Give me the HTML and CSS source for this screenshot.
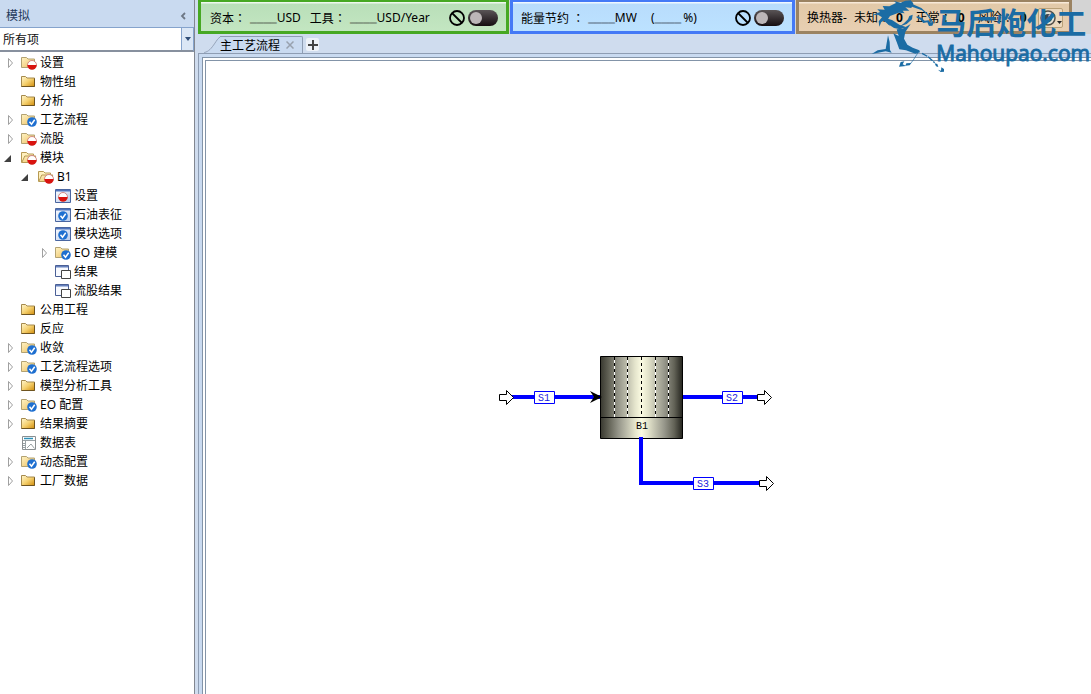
FILE: index.html
```
<!DOCTYPE html>
<html lang="zh-CN">
<head>
  <meta charset="UTF-8">
  <meta name="viewport" content="width=device-width, initial-scale=1.0">
  <title>主工艺流程</title>
  <link rel="stylesheet" href="styles.css">
</head>
<body>
<svg class="defs" width="0" height="0" aria-hidden="true">
  <defs>
    <linearGradient id="gold" x1="0" y1="0" x2="1" y2="1">
      <stop offset="0" stop-color="#fff6cf"/>
      <stop offset=".5" stop-color="#f5d170"/>
      <stop offset="1" stop-color="#d08c0c"/>
    </linearGradient>
    <linearGradient id="pale" x1="0" y1="0" x2="1" y2="1">
      <stop offset="0" stop-color="#fff3c4"/>
      <stop offset="1" stop-color="#ecbf60"/>
    </linearGradient>
    <linearGradient id="sheet" x1="0" y1="0" x2="1" y2="1">
      <stop offset="0" stop-color="#fff"/>
      <stop offset="1" stop-color="#b4c8ea"/>
    </linearGradient>
  </defs>
  <symbol id="i-red" viewBox="0 0 10 10">
    <circle cx="5" cy="5" r="4.5" fill="#fff" stroke="#c9706c" stroke-width=".8"/>
    <path d="M.4 5h9.200a4.600 4.600 0 0 1-9.200 0z" fill="#d9130f"/>
  </symbol>
  <symbol id="i-ok" viewBox="0 0 10 10">
    <circle cx="5" cy="5" r="4.800" fill="#1e6fd0"/>
    <path d="M2.500 4.800l2 2.400L7.700 2.800" fill="none" stroke="#fff" stroke-width="1.500"/>
  </symbol>
  <symbol id="i-folder" viewBox="0 0 16 16">
    <path d="M.5 12.500v-10h4l1.500 1.500h7.500v8.500z" fill="url(#gold)" stroke="#a58a4e"/>
    <path d="M.5 12.500h13V4.500" fill="none" stroke="#6e5420"/>
  </symbol>
  <symbol id="i-pale" viewBox="0 0 16 16">
    <path d="M.5 12.500v-10h5l1.500 1.500h6.500v8.500z" fill="url(#pale)" stroke="#b3a272"/>
  </symbol>
  <symbol id="i-open" viewBox="0 0 16 16">
    <path d="M.5 12.500v-10h5l1.500 1.500h5.500v2" fill="#fff0bd" stroke="#b79a53"/>
    <path d="M.8 12.500l3-6.500h11l-3 6.500z" fill="url(#pale)" stroke="#b79a53"/>
  </symbol>
  <symbol id="i-form" viewBox="0 0 16 16">
    <path d="M.5 1.500h15v13H.5z" fill="url(#sheet)" stroke="#4a66a0"/>
    <path d="M1 2h14v1.500H1z" fill="#4f74bd"/>
  </symbol>
  <symbol id="i-result" viewBox="0 0 16 16">
    <path d="M.5 1.500h13v11H.5z" fill="#f8faff" stroke="#4a5f96"/>
    <path d="M1 2h12v1.500H1z" fill="#6581bd"/>
    <path d="M6.500 6.500h9v8h-9z" fill="#fff" stroke="#444"/>
  </symbol>
  <symbol id="i-data" viewBox="0 0 16 16">
    <path d="M1.500 1.500h13v13h-13z" fill="#fff" stroke="#8a8f91"/>
    <path d="M3 3.500h9" stroke="#2b90b8" stroke-width="1.500"/>
    <path d="M2 5.500h12M2 8.500h2M2 10.500h2M2 12.500h2M4.500 6v8M6 13l4-4 3.500 4.500" fill="none" stroke="#9aa2a5"/>
  </symbol>
  <symbol id="i-closed" viewBox="0 0 8 12">
    <path d="M1.500 1.500v9L5.500 6z" fill="#fff" stroke="#a0a0a0"/>
  </symbol>
  <symbol id="i-opened" viewBox="0 0 8 12">
    <path d="M7 3v7H0z" fill="#404040"/>
  </symbol>
  <symbol id="i-no" viewBox="0 0 16 16">
    <circle cx="8" cy="8" r="7" fill="none" stroke="#000" stroke-width="1.800"/>
    <path d="M3 3l10 10" stroke="#000" stroke-width="1.800"/>
  </symbol>
</svg>

<div class="app">
  <aside class="sidebar">
    <header class="side-head">
      <span>模拟</span>
      <button class="collapse" aria-label="折叠">
        <svg width="6" height="8" viewBox="0 0 6 8"><path d="M5 1L2 4 5 7" fill="none" stroke="#6d7785" stroke-width="1.800"/></svg>
      </button>
    </header>
    <div class="filter">
      <select aria-label="筛选"><option>所有项</option></select>
      <span class="filter-arrow"><svg width="6" height="4" viewBox="0 0 6 4"><path d="M0 0h6L3 4z" fill="#2f4d77"/></svg></span>
    </div>
    <nav class="tree"><ul id="tree"></ul></nav>
  </aside>

  <main class="main">
    <div class="panels">
      <section class="panel capital">
        <span>资本<i lang="zh-TW">：</i></span><span class="blank">____</span><span>USD</span>
        <span class="next">工具<i lang="zh-TW">：</i></span><span class="blank">____</span><span>USD/Year</span>
        <div class="switch">
          <svg width="16" height="16"><use href="#i-no"/></svg>
          <input type="checkbox" aria-label="资本分析">
        </div>
      </section>
      <section class="panel energy">
        <span>能量节约 <i lang="zh-TW">：</i></span><span class="blank">____</span><span>MW</span>
        <span class="paren">(</span><span class="blank tight">____</span><span class="percent">%)</span>
        <div class="switch">
          <svg width="16" height="16"><use href="#i-no"/></svg>
          <input type="checkbox" aria-label="能量分析">
        </div>
      </section>
      <section class="panel exchanger">
        <span>换热器-</span>
        <span class="stat">未知<i lang="zh-TW">：</i><b>0</b></span>
        <span class="stat">正常<i lang="zh-TW">：</i><b>0</b></span>
        <span class="stat">风险<i lang="zh-TW">：</i><b>0</b></span>
        <button class="eye" aria-label="显示">
          <svg width="22" height="18" viewBox="0 0 22 18">
            <circle cx="8" cy="8" r="7" fill="#e8e0d4" stroke="#55504a" stroke-width="1.500"/>
            <circle cx="8" cy="8" r="4" fill="#3d4650"/>
            <circle cx="10" cy="6" r="1.500" fill="#fff"/>
            <path d="M17 11h5l-2.500 3z" fill="#222"/>
          </svg>
        </button>
      </section>
    </div>

    <div class="tabs">
      <div class="tab">
        <svg class="tab-edge" width="22" height="19" viewBox="0 0 22 19">
          <path d="M0 19C5 18 8 14 12 8S17 .5 22 .5V19z" fill="#c9daf0"/>
          <path d="M0 18.500C5 17.500 8 14 12 8S17 .5 22 .5" fill="none" stroke="#8e9db3"/>
        </svg>
        <div class="tab-body">
          <span>主工艺流程</span>
          <button class="tab-close" aria-label="关闭">
            <svg width="8" height="8" viewBox="0 0 8 8"><path d="M.5.5l7 7M7.500.5l-7 7" stroke="#98a1ae" stroke-width="1.500"/></svg>
          </button>
        </div>
      </div>
      <button class="tab-add" aria-label="新建">
        <svg width="10" height="10" viewBox="0 0 10 10"><path d="M0 5h10M5 0v10" stroke="#444" stroke-width="2"/></svg>
      </button>
    </div>

    <div class="frame">
      <div class="canvas">
        <svg class="flowsheet" width="290" height="155" viewBox="490 345 290 155">
          <defs>
            <linearGradient id="steel">
              <stop offset="0" stop-color="#38382f"/>
              <stop offset=".1" stop-color="#626256"/>
              <stop offset=".22" stop-color="#96968a"/>
              <stop offset=".33" stop-color="#c0c0ae"/>
              <stop offset=".42" stop-color="#e4e4cc"/>
              <stop offset=".5" stop-color="#fbfbe2"/>
              <stop offset=".58" stop-color="#e4e4cc"/>
              <stop offset=".67" stop-color="#c0c0ae"/>
              <stop offset=".78" stop-color="#96968a"/>
              <stop offset=".9" stop-color="#626256"/>
              <stop offset="1" stop-color="#24241e"/>
            </linearGradient>
          </defs>
          <path d="M512 397h89M683 397h75" stroke="#00f" stroke-width="4"/>
          <path d="M600.500 356.500h82v82h-82z" fill="url(#steel)" stroke="#000"/>
          <path d="M600 417.500h83" stroke="#000"/>
          <path d="M614.500 357v60M627.500 357v60M655.500 357v60M668.500 357v60" stroke="#fff"/>
          <path d="M614.500 357v60M627.500 357v60M641.500 357v60M655.500 357v60M668.500 357v60" stroke="#000" stroke-dasharray="3 3"/>
          <path d="M641 437v46h119" fill="none" stroke="#00f" stroke-width="4"/>
          <path d="M590 391l12 6-12 6 4-6z" fill="#000"/>
          <g fill="#fff" stroke="#000">
            <path d="M499.500 394.500h7v-4l7 7-7 7v-4h-7z"/>
            <path d="M757.500 394.500h7v-4l7 7-7 7v-4h-7z"/>
            <path d="M759.500 480.500h7v-4l7 7-7 7v-4h-7z"/>
          </g>
          <path d="M534.500 391.500h20v12h-20zM722.500 391.500h20v12h-20zM693.500 477.500h20v12h-20z" fill="#fff" stroke="#00f"/>
          <g class="stream">
            <text x="544" y="401">S1</text>
            <text x="732" y="401">S2</text>
            <text x="703" y="487">S3</text>
          </g>
          <text class="block" x="642" y="429">B1</text>
        </svg>
      </div>
    </div>
  </main>

  <div class="brand">
    <svg class="horse" width="76" height="76" viewBox="0 0 228 228" fill="#1b6ca4">
      <!-- mane and back -->
      <path d="M12 46L36 36 28 28 50 29 44 18 64 19 84 9 78 3 98 8 112 2 128 1 136 10 130 24 112 22 124 32 104 32 110 40 92 38 66 48 58 60 66 78 48 62 40 66 34 80 32 64 42 52 30 44z"/>
      <!-- head -->
      <path d="M122 3l16 11 22 10 20 18 17 26-4 9-10 1-5-11-12 2-11-12-9-4 0-5 14 5 10 9 12-1 6 8 3-3-14-22-15-13-26-9-16-6z"/>
      <path d="M134 44l-2 14-16 14-22 8 14-10 12-12 4-10z"/>
      <!-- body and front legs -->
      <path d="M52 54l20 6 22 14 22 8-20 6-18-4-18-12z"/>
      <path d="M86 88l18-2 24-14-16 24-4 20 10 18 16 9 20 8 2 6-14 4-28-10-20-3-8-22-10-26 16 8z"/>
      <path d="M60 106l5 20 1 24 5 8-18-4-42 8 18-11 24-4z"/>
      <!-- hind legs and hooves -->
      <path d="M150 158l-14 22-8 10" fill="none" stroke="#1b6ca4" stroke-width="2"/>
      <path d="M93 200l5-14 11-2-5 9 10 5zM112 197l3-7 15-1-5 7z"/>
      <path d="M162 160l18 10 20 18" fill="none" stroke="#1b6ca4" stroke-width="4" stroke-dasharray="18 3"/>
      <path d="M200 190l8 2 3 9-7-2zM210 209l9 3 1-10 8 5v8l-10 1z"/>
    </svg>
    <div class="brand-text">
      <strong>马后炮化工</strong>
      <span>Mahoupao.com</span>
    </div>
  </div>
</div>

<script>
  // [label, icon, badge, state, children]
  const items = [
    ['设置', 'pale', 'red', 'closed'],
    ['物性组', 'folder'],
    ['分析', 'folder'],
    ['工艺流程', 'pale', 'ok', 'closed'],
    ['流股', 'pale', 'red', 'closed'],
    ['模块', 'open', 'red', 'opened', [
      ['B1', 'open', 'red', 'opened', [
        ['设置', 'form', 'red'],
        ['石油表征', 'form', 'ok'],
        ['模块选项', 'form', 'ok'],
        ['EO 建模', 'pale', 'ok', 'closed'],
        ['结果', 'result'],
        ['流股结果', 'result']
      ]]
    ]],
    ['公用工程', 'folder'],
    ['反应', 'folder'],
    ['收敛', 'pale', 'ok', 'closed'],
    ['工艺流程选项', 'pale', 'ok', 'closed'],
    ['模型分析工具', 'folder', '', 'closed'],
    ['EO 配置', 'pale', 'ok', 'closed'],
    ['结果摘要', 'folder', '', 'closed'],
    ['数据表', 'data'],
    ['动态配置', 'pale', 'ok', 'closed'],
    ['工厂数据', 'folder', '', 'closed']
  ];

  function render(list) {
    return list.map(([label, icon, badge, state, children]) => {
      const toggle = state
        ? `<button class="toggle ${state}" aria-label="${label}"><svg width="8" height="12"><use href="#i-${state}"/></svg></button>`
        : '<span class="toggle"></span>';
      const mark = !badge ? ''
        : icon === 'form' ? `<use href="#i-${badge}" x="3" y="4" width="10" height="10"/>`
        : `<use href="#i-${badge}" x="6" y="5" width="10" height="10"/>`;
      return `<li><div class="row">${toggle}<svg width="16" height="16"><use href="#i-${icon}" width="16" height="16"/>${mark}</svg><span>${label}</span></div>${children ? `<ul>${render(children)}</ul>` : ''}</li>`;
    }).join('');
  }

  document.querySelector('#tree').innerHTML = render(items);
</script>
</body>
</html>
```
FILE: styles.css
```
* {
  box-sizing: border-box;
}
body {
  margin: 0;
  font-family: "Noto Sans", "Noto Sans CJK SC", sans-serif;
  font-size: 12px;
  line-height: 19px;
  color: #000;
}
button {
  padding: 0;
  border: 0;
  background: none;
  font: inherit;
}
svg {
  display: block;
  flex: none;
}
.defs {
  position: absolute;
}
.app {
  position: relative;
  display: flex;
  min-height: 100vh;
  background: #cfdcee;
}

/* left pane */
.sidebar {
  width: 195px;
  flex: none;
  display: flex;
  flex-direction: column;
  background: #fff;
  border-right: 1px solid #828790;
}
.side-head {
  height: 27px;
  display: flex;
  align-items: center;
  justify-content: space-between;
  padding: 4px 8px 0 6px;
  background: #c9daf0;
  color: #1e395b;
}
.filter {
  display: flex;
  height: 25px;
  border: 1px solid #85a3cc;
  border-left: 0;
  border-bottom: 2px solid #87909e;
  position: relative;
}
.filter select {
  appearance: none;
  width: 100%;
  border: 0;
  padding: 0 3px;
  background: #fff;
  font: inherit;
  color: #111;
}
.filter-arrow {
  position: absolute;
  top: 0;
  right: 0;
  bottom: 0;
  width: 12px;
  display: flex;
  align-items: center;
  justify-content: center;
  background: #dbe7f6;
  border-left: 1px solid #85a3cc;
  pointer-events: none;
}
.tree {
  padding-top: 1px;
}
.tree ul {
  margin: 0;
  padding: 0;
  list-style: none;
}
.tree ul ul {
  padding-left: 17px;
}
.row {
  display: flex;
  align-items: center;
  gap: 3px;
  height: 19px;
  padding-left: 4px;
  white-space: nowrap;
}
.toggle {
  width: 14px;
  flex: none;
  display: flex;
  padding-left: 3px;
}
.toggle.opened {
  padding-left: 0;
}

/* right side */
.main {
  flex: 1;
  min-width: 0;
  margin-left: 3px;
  display: flex;
  flex-direction: column;
}
.panels {
  display: grid;
  grid-template-columns: 311fr 285fr 276fr;
  gap: 1px;
  padding-right: 19px;
  height: 34px;
  background: #d4d4d4;
}
.panel {
  display: flex;
  align-items: center;
  height: 34px;
  padding: 2px 9px 0;
  border: 3px solid;
  border-top-width: 2px;
  white-space: nowrap;
}
.panel i {
  font-family: "Noto Sans CJK TC", sans-serif;
  font-style: normal;
}
.capital {
  border-color: #46a823;
  background: linear-gradient(#eef8ee 1px, #b9dfb9 2px, #c3e6c1);
}
.energy {
  padding-left: 8px;
  border-color: #4479f6;
  background: linear-gradient(#eef7ff 1px, #b8dcfc 2px, #bce2ff);
}
.exchanger {
  padding-left: 8px;
  border-color: #9b8362;
  background: linear-gradient(#f7e9d8 1px, #e2c9a8 2px, #e8cfb2);
}
.blank {
  margin-left: 4px;
  font-family: "Liberation Sans", sans-serif;
  font-weight: bold;
  color: #62705f;
  text-shadow: 0 1px #62705f;
}
.energy .blank {
  color: #5c6f82;
  text-shadow: 0 1px #5c6f82;
}
.energy .blank.tight {
  margin-left: 0;
}
.next {
  margin-left: 9px;
}
.paren {
  margin-left: 14px;
}
.percent {
  margin-left: 2px;
}
.switch {
  display: flex;
  align-items: center;
  gap: 3px;
  margin-left: auto;
  margin-right: -1px;
}
.switch input {
  appearance: none;
  width: 30px;
  height: 16px;
  margin: 0;
  padding: 2px;
  border-radius: 8px;
  background: linear-gradient(#5a5557, #150d10);
}
.switch input::before {
  content: "";
  display: block;
  width: 12px;
  height: 12px;
  border-radius: 50%;
  background: #bcb6b8;
}
.stat {
  display: flex;
  margin-left: 7px;
}
.stat b {
  margin-left: 6px;
}
.stat + .stat {
  margin-left: 13px;
}
.eye {
  margin-left: auto;
  margin-right: -3px;
  width: 25px;
  height: 20px;
  padding: 1px;
  border: 1px solid #b9a078;
  border-radius: 2px;
  background: #ecd9bf;
}

/* tabs */
.tabs {
  display: flex;
  align-items: flex-end;
  gap: 3px;
  height: 19px;
  padding-left: 5px;
}
.tab {
  display: flex;
  height: 17px;
}
.tab-edge {
  height: 17px;
}
.tab-body {
  display: flex;
  align-items: center;
  gap: 6px;
  padding: 0 8px 0 0;
  border-top: 1px solid #8e9db3;
  border-right: 1px solid #8e9db3;
  border-radius: 0 2px 0 0;
  background: #c9daf0;
  margin-left: -5px;
}
.tab-add {
  width: 13px;
  height: 13px;
  margin-bottom: 2px;
  display: flex;
  align-items: center;
  justify-content: center;
  border-radius: 2px;
  background: #eef2f8;
}

/* drawing area */
.frame {
  flex: 1;
  display: flex;
  padding: 3px 0 0 3px;
  border-top: 1px solid #8e9db3;
  border-left: 1px solid #8e9db3;
  background: #c9daf0;
}
.canvas {
  position: relative;
  flex: 1;
  border-top: 1px solid #8394a8;
  border-left: 1px solid #8394a8;
  padding: 2px 0 0 2px;
  background: #fff;
}
.canvas::before {
  content: "";
  display: block;
  height: 100%;
  border-top: 1px solid #8394a8;
  border-left: 1px solid #8394a8;
}
.flowsheet {
  position: absolute;
  left: 287px;
  top: 287px;
}
.stream text,
.block {
  font-family: "Liberation Mono", monospace;
  font-size: 10px;
  text-anchor: middle;
}
.stream text {
  fill: #2222dd;
}

/* logo laid over the top right corner */
.brand {
  position: absolute;
  top: 0;
  right: 1px;
  display: flex;
  color: #1b6ca4;
  pointer-events: none;
}
.brand-text {
  display: flex;
  flex-direction: column;
  margin-left: -8px;
  padding-top: 6px;
}
.brand-text strong {
  font-size: 30px;
  line-height: 34px;
}
.brand-text span {
  font-family: "Open Sans", "Noto Sans", sans-serif;
  font-size: 21px;
  line-height: 26px;
  -webkit-text-stroke: 1px #1b6ca4;
}
```
